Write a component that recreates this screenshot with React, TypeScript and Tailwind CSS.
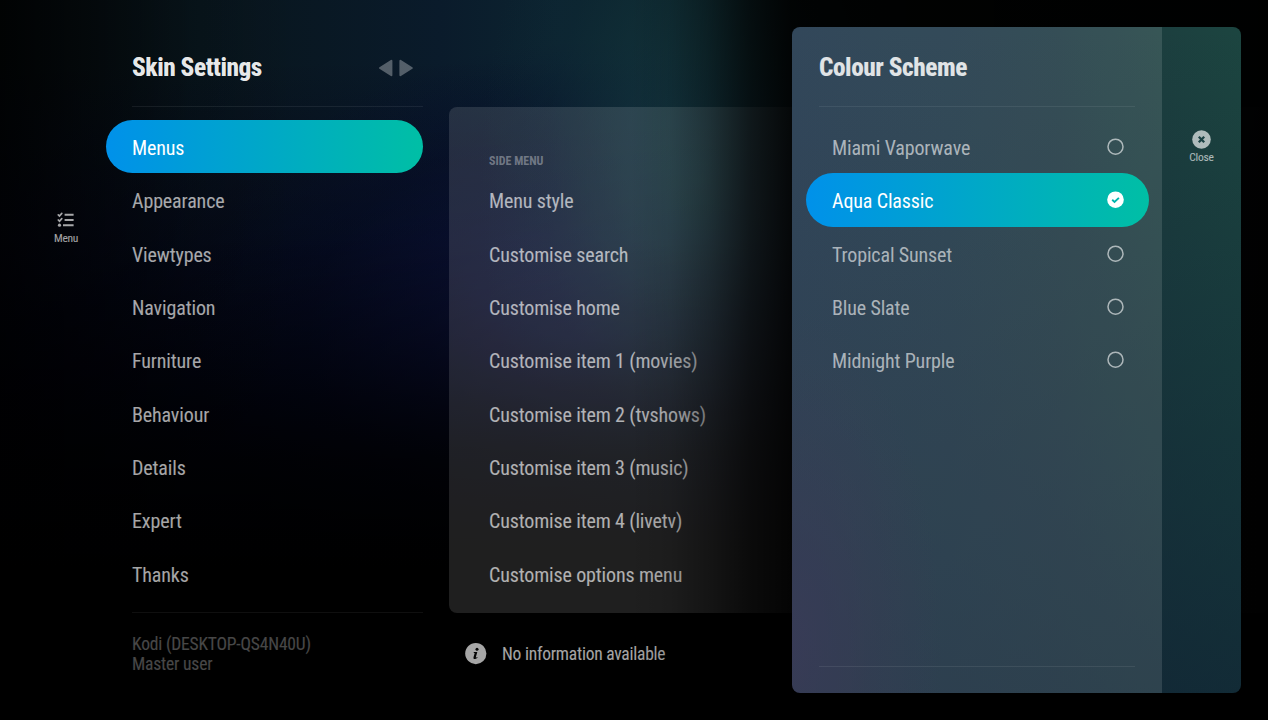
import React from "react";

const menuItems = ["Menus", "Appearance", "Viewtypes", "Navigation", "Furniture", "Behaviour", "Details", "Expert", "Thanks"];

const sideMenuItems = [
  "Menu style",
  "Customise search",
  "Customise home",
  "Customise item 1 (movies)",
  "Customise item 2 (tvshows)",
  "Customise item 3 (music)",
  "Customise item 4 (livetv)",
  "Customise options menu",
];

const schemes = ["Miami Vaporwave", "Aqua Classic", "Tropical Sunset", "Blue Slate", "Midnight Purple"];

function ChecklistIcon() {
  return (
    <svg width="18" height="16" viewBox="0 0 18 16" fill="none" stroke="currentColor" strokeLinecap="round">
      <path d="M7.6 2.8H16.6M7.6 8H16.6M6 13.2H16.6" strokeWidth="2.1" strokeLinecap="butt" />
      <path d="M1.3 2.8 2.5 4 4.8 1.4M1.3 8 2.5 9.2 4.8 6.6" strokeWidth="1.7" />
      <circle cx="2.5" cy="13.2" r="1.6" fill="currentColor" stroke="none" />
    </svg>
  );
}

function Arrows() {
  return (
    <svg className="opacity-30" width="36" height="18" viewBox="0 0 36 18" fill="#fff" stroke="#fff" strokeWidth="2" strokeLinejoin="round">
      <path d="M13.4 1.8V16.2L2 9Z" />
      <path d="M22.4 1.8V16.2L33.8 9Z" />
    </svg>
  );
}

function CloseIcon() {
  return (
    <svg width="19" height="19" viewBox="0 0 19 19">
      <circle cx="9.5" cy="9.5" r="9.3" fill="currentColor" />
      <path d="M6.8 6.8 12.2 12.2M12.2 6.8 6.8 12.2" stroke="#1c4244" strokeWidth="2.3" />
    </svg>
  );
}

function InfoIcon() {
  return (
    <svg width="22" height="22" viewBox="0 0 22 22">
      <circle cx="10.8" cy="10.6" r="10.6" fill="currentColor" />
      <circle cx="12" cy="6.3" r="1.5" fill="#050505" />
      <path d="M8.9 9.1H12.3L10.8 14.3Q10.8 14.9 12.4 13.9L12.6 14.5Q10.7 16.4 9.2 16Q8.1 15.6 8.5 14.2L9.7 10H8.6Z" fill="#050505" />
    </svg>
  );
}

function Radio({ checked }: { checked: boolean }) {
  return (
    <svg width="17" height="17" viewBox="0 0 17 17" fill="none">
      {checked ? (
        <>
          <circle cx="8.5" cy="8.7" r="8.3" fill="#fff" />
          <path d="M5.2 8.8 7.5 10.9 11.9 6.9" stroke="#00b5ae" strokeWidth="1.9" />
        </>
      ) : (
        <circle cx="8.5" cy="8.7" r="7.5" stroke="currentColor" strokeWidth="1.5" />
      )}
    </svg>
  );
}

export default function App() {
  return (
    <div className="relative h-[720px] w-[1268px] overflow-hidden bg-black bg-[linear-gradient(90deg,rgba(0,0,0,.7)_0px,rgba(0,0,0,.45)_80px,rgba(0,0,0,.12)_190px,transparent_300px),linear-gradient(180deg,transparent_120px,rgba(0,0,0,.12)_240px,rgba(0,0,0,.5)_370px,rgba(0,0,0,.82)_460px,#000_570px),radial-gradient(ellipse_220px_400px_at_700px_180px,rgba(22,60,68,.9)_0%,rgba(20,54,64,.65)_35%,rgba(16,44,58,.25)_70%,transparent_100%),radial-gradient(ellipse_400px_290px_at_590px_330px,rgba(22,26,84,.85)_0%,rgba(12,18,62,.6)_40%,rgba(6,12,46,.35)_70%,transparent_100%),linear-gradient(180deg,transparent_60px,rgba(3,4,24,.65)_260px,rgba(0,0,20,.8)_400px),linear-gradient(90deg,#04090b_0px,#08151c_200px,#0a1b2b_440px,#0c2430_560px,#0b2426_700px,#06120f_800px)] font-['Roboto_Condensed',Roboto,sans-serif] text-white antialiased [font-stretch:75%]">
      <div className="flex h-full">
        <nav className="flex w-[106px] shrink-0 flex-col items-center pl-[26px] pt-[212px] text-white/65">
          <ChecklistIcon />
          <span className="mt-[4px] text-[11.5px] leading-[13px] tracking-[-0.35px]">Menu</span>
        </nav>

        <section className="w-[317px] shrink-0">
          <header className="ml-[26px] flex h-[107px] items-center justify-between border-b border-white/7 pr-[9px] pt-[30px] pb-0">
            <h1 className="text-[25.3px] font-extrabold tracking-[-0.45px] text-white/93">Skin Settings</h1>
            <Arrows />
          </header>
          <ul className="mt-[13px]">
            {menuItems.map((item, i) => (
              <li
                key={item}
                className={`flex h-[53.33px] items-center rounded-full pt-[3px] pl-[26px] text-[20px] tracking-[-0.13px] ${i === 0 ? "bg-[linear-gradient(90deg,#0091ea,#00bfa5)] text-white" : "text-white/65"}`}
              >
                {item}
              </li>
            ))}
          </ul>
          <footer className="mt-[12px] ml-[26px] border-t border-white/6 pt-[21px] text-[17.5px] leading-[20px] tracking-[-0.18px] text-white/28">
            <p>Kodi (DESKTOP-QS4N40U)</p>
            <p>Master user</p>
          </footer>
        </section>

        <main className="ml-[26px] min-w-0 grow pt-[107px]">
          <div className="h-[506px] rounded-lg bg-white/12 pt-[45px] pl-10">
            <h2 className="text-[12px] leading-[18px] font-bold text-white/35">SIDE MENU</h2>
            <ul className="mt-[3.5px]">
              {sideMenuItems.map((item) => (
                <li key={item} className="flex h-[53.33px] items-center pt-[2.5px] text-[20px] tracking-[-0.14px] text-white/65">
                  {item}
                </li>
              ))}
            </ul>
          </div>
          <div className="mt-[29px] flex h-6 items-center gap-[15px] pl-4 text-[17.5px] tracking-[-0.24px] text-white/65">
            <InfoIcon />
            <span>No information available</span>
          </div>
        </main>
      </div>

      <div className="absolute inset-0 bg-[linear-gradient(90deg,transparent_630px,rgba(0,0,0,.1)_670px,rgba(0,0,0,.35)_710px,rgba(0,0,0,.66)_750px,rgba(0,0,0,.88)_792px,rgba(0,0,0,.97)_100%)]" />

      <section className="absolute top-[27px] left-[792px] flex h-[666px] w-[449px] overflow-hidden rounded-lg bg-[radial-gradient(ellipse_150px_340px_at_0px_620px,rgba(34,30,66,.7)_0%,rgba(32,32,64,.35)_50%,transparent_100%),linear-gradient(180deg,transparent_0%,rgba(14,32,50,.7)_100%),linear-gradient(90deg,#162e44_0%,#173242_35%,#1a363f_60%,#1c3f3f_82%,#1c4540_100%)]">
        <div className="w-[370px] shrink-0 bg-white/12 px-[27px]">
          <header className="flex h-[80px] items-center border-b border-white/7 pt-[3px]">
            <h2 className="text-[25.3px] font-extrabold tracking-[-0.45px] text-white/85">Colour Scheme</h2>
          </header>
          <ul className="-mx-[13.5px] mt-[13px]">
            {schemes.map((scheme, i) => (
              <li
                key={scheme}
                className={`flex h-[53.33px] items-center justify-between rounded-full pr-[24.5px] pl-[26.5px] text-[20px] tracking-[-0.14px] ${i === 1 ? "bg-[linear-gradient(90deg,#0091ea,#00bfa5)] text-white" : "text-white/60"}`}
              >
                <span className="pt-[3px]">{scheme}</span>
                <Radio checked={i === 1} />
              </li>
            ))}
          </ul>
          <div className="mt-[279px] h-px bg-white/8" />
        </div>
        <aside className="flex grow flex-col items-center pt-[103px] text-white/65">
          <CloseIcon />
          <span className="mt-[2px] text-[11.5px] leading-[13px] tracking-[-0.25px]">Close</span>
        </aside>
      </section>
    </div>
  );
}
